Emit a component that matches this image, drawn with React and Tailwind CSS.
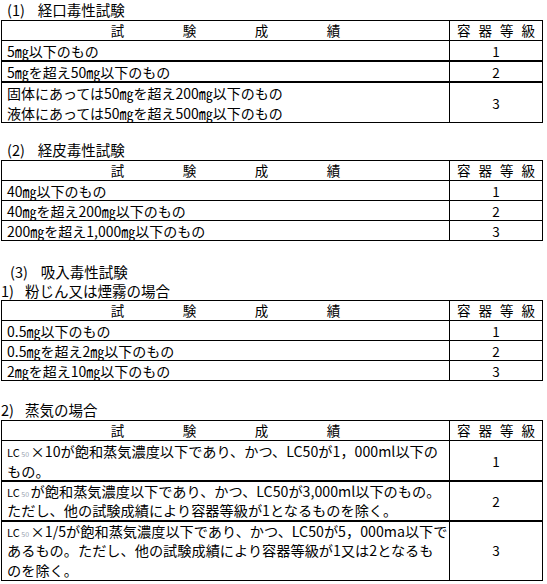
import React from "react";

const font = "font-['Noto_Sans_CJK_JP','Noto_Sans_CJK_SC',sans-serif]";

const Header = () => (
  <div className="flex h-[19px] leading-[19px] text-[13.5px]">
    <div className="w-[448px] border-r border-black flex justify-center">
      {["試", "験", "成", "績"].map((c) => (
        <span key={c} className="w-[72px] text-center">{c}</span>
      ))}
    </div>
    <div className="flex-1 flex justify-center gap-[8px]">
      {["容", "器", "等", "級"].map((c) => (
        <span key={c}>{c}</span>
      ))}
    </div>
  </div>
);

const Row = ({ h = "h-[20px]", thick, size = "text-[14px]", lead = "leading-[20px]", grade, children }) => (
  <div className={`flex ${h} ${thick ? "border-t-2" : "border-t"} border-black ${size} ${lead}`}>
    <div className="w-[448px] border-r border-black pl-[5px] whitespace-nowrap">
      {children}
    </div>
    <div className="flex-1 flex items-center justify-center text-[13.5px]">{grade}</div>
  </div>
);

const Table = ({ children }) => (
  <div className="ml-[1px] w-[542px] border border-black">
    <Header />
    {children}
  </div>
);

// LC50 with the small grey subscript
const LC = () => (
  <>
    <span className="text-[11px] leading-[0]">LC</span>
    <span className="text-[7px] leading-[0] text-gray-400"> 50 </span>
  </>
);

export default function App() {
  return (
    <div className={`w-[547px] min-h-[584px] bg-white text-black ${font}`}>
      {/* (1) */}
      <div className="h-[20px] leading-[20px] text-[14.5px] pl-[7px] flex gap-[13px]">
        <span>(1)</span>
        <span>経口毒性試験</span>
      </div>
      <Table>
        <Row grade="1">5㎎以下のもの</Row>
        <Row grade="2" thick h="h-[21px]">5㎎を超え50㎎以下のもの</Row>
        <Row grade="3" thick h="h-[41px]">
          固体にあっては50㎎を超え200㎎以下のもの
          <br />
          液体にあっては50㎎を超え500㎎以下のもの
        </Row>
      </Table>

      {/* (2) */}
      <div className="mt-[17px] h-[20px] leading-[20px] text-[14.5px] pl-[7px] flex gap-[13px]">
        <span>(2)</span>
        <span>経皮毒性試験</span>
      </div>
      <Table>
        <Row grade="1">40㎎以下のもの</Row>
        <Row grade="2">40㎎を超え200㎎以下のもの</Row>
        <Row grade="3">200㎎を超え1,000㎎以下のもの</Row>
      </Table>

      {/* (3) */}
      <div className="mt-[21px] h-[19px] leading-[19px] text-[14.5px] pl-[10px] flex gap-[13px]">
        <span>(3)</span>
        <span>吸入毒性試験</span>
      </div>
      <div className="h-[19px] leading-[19px] text-[14.5px] pl-[1px] flex gap-[11px]">
        <span>1)</span>
        <span>粉じん又は煙霧の場合</span>
      </div>
      <Table>
        <Row grade="1">0.5㎎以下のもの</Row>
        <Row grade="2">0.5㎎を超え2㎎以下のもの</Row>
        <Row grade="3">2㎎を超え10㎎以下のもの</Row>
      </Table>

      {/* 2) vapour */}
      <div className="mt-[19px] h-[20px] leading-[20px] text-[14.5px] pl-[1px] flex gap-[11px]">
        <span>2)</span>
        <span>蒸気の場合</span>
      </div>
      <Table>
        <Row grade="1" h="h-[40px]" size="text-[14.2px]">
          <LC />×10が飽和蒸気濃度以下であり、かつ、LC50が1，000ml以下の
          <br />
          もの。
        </Row>
        <Row grade="2" thick h="h-[40px]" lead="leading-[19px]" size="text-[14.2px]">
          <LC />が飽和蒸気濃度以下であり、かつ、LC50が3,000ml以下のもの。
          <br />
          ただし、他の試験成績により容器等級が1となるものを除く。
        </Row>
        <Row grade="3" thick h="h-[60px]" lead="leading-[19.3px]" size="text-[14.2px]">
          <LC />×1/5が飽和蒸気濃度以下であり、かつ、LC50が5，000ma以下で
          <br />
          あるもの。ただし、他の試験成績により容器等級が1又は2となるも
          <br />
          のを除く。
        </Row>
      </Table>
    </div>
  );
}
